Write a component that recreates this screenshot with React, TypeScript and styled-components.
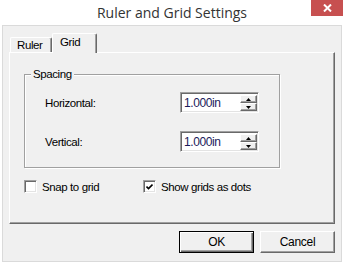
import React from 'react';
import styled, { createGlobalStyle } from 'styled-components';

const GlobalStyle = createGlobalStyle`
  html, body {
    margin: 0;
    padding: 0;
    background: #ffffff;
  }
`;

const uiFont = `'Liberation Sans', Arial, sans-serif`;

const Window = styled.div`
  width: 344px;
  height: 264px;
  background: #ffffff;
  display: flex;
  flex-direction: column;
  font-family: ${uiFont};
  font-size: 11.5px;
  letter-spacing: -0.4px;
  color: #000;
  box-sizing: border-box;
`;

const TitleBar = styled.div`
  position: relative;
  height: 25px;
  flex: none;
  display: flex;
  align-items: center;
  justify-content: center;
  font-family: 'Open Sans', 'Noto Sans', sans-serif;
  font-size: 14px;
  letter-spacing: 0;
  color: #333333;
`;

const CloseButton = styled.div`
  position: absolute;
  top: 0;
  right: 1px;
  width: 32px;
  height: 16px;
  background: #c75050;
  display: flex;
  align-items: center;
  justify-content: center;
`;

const Client = styled.div`
  flex: 1;
  margin: 0 2px 2px;
  border: 1px solid #dadada;
  background: #f0f0f0;
  display: flex;
  flex-direction: column;
  padding: 7px 6px 8px 6px;
  min-height: 0;
`;

const TabStrip = styled.div`
  display: flex;
  align-items: flex-end;
  height: 19px;
  position: relative;
  z-index: 1;
`;

const Tab = styled.div<{ $active?: boolean }>`
  box-sizing: border-box;
  height: ${(p) => (p.$active ? '20px' : '15px')};
  margin-bottom: ${(p) => (p.$active ? '-1px' : '0')};
  margin-left: ${(p) => (p.$active ? '0' : '1px')};
  width: ${(p) => (p.$active ? '45px' : '42px')};
  padding: ${(p) => (p.$active ? '2px 0 0 7px' : '1px 0 0 6px')};
  background: #f0f0f0;
  border-top: 1px solid #ffffff;
  border-left: 1px solid #ffffff;
  border-right: 1px solid #696969;
  box-shadow: inset -1px 0 0 #a0a0a0;
  border-top-left-radius: 2px;
  border-top-right-radius: 2px;
`;

const Panel = styled.div`
  box-sizing: border-box;
  height: 172px;
  border-top: 1px solid #ffffff;
  border-left: 1px solid #ffffff;
  border-right: 1px solid #696969;
  border-bottom: 1px solid #696969;
  box-shadow: inset -1px -1px 0 #a0a0a0;
  display: flex;
  flex-direction: column;
  padding: 0 0 0 14px;
`;

const GroupBox = styled.div`
  position: relative;
  box-sizing: border-box;
  margin-top: 21px;
  width: 256px;
  height: 94px;
  border: 1px solid #a0a0a0;
  box-shadow: 1px 1px 0 #ffffff, inset 1px 1px 0 #ffffff;
  padding: 17px 0 0 20px;
  display: grid;
  grid-template-columns: 135px 79px;
  grid-auto-rows: 21px;
  row-gap: 18px;
  align-items: center;
`;

const Legend = styled.span`
  position: absolute;
  top: -8px;
  left: 6px;
  padding: 0 2px;
  background: #f0f0f0;
  line-height: 14px;
`;

const FieldLabel = styled.span`
  line-height: 14px;
`;

const SpinBox = styled.div`
  box-sizing: border-box;
  height: 21px;
  width: 79px;
  background: #ffffff;
  border-top: 1px solid #a0a0a0;
  border-left: 1px solid #a0a0a0;
  border-right: 1px solid #ffffff;
  border-bottom: 1px solid #ffffff;
  box-shadow: inset 1px 1px 0 #696969, inset -1px -1px 0 #e3e3e3;
  display: flex;
  padding: 2px 1px 1px 2px;
`;

const SpinText = styled.span`
  flex: 1;
  padding: 1px 0 0 1px;
  font-size: 12px;
  letter-spacing: -0.4px;
  color: #1a1a5a;
`;

const SpinButtons = styled.div`
  width: 17px;
  display: flex;
  flex-direction: column;
`;

const SpinButton = styled.div`
  flex: 1;
  box-sizing: border-box;
  background: #f0f0f0;
  border-top: 1px solid #ffffff;
  border-left: 1px solid #ffffff;
  border-right: 1px solid #696969;
  border-bottom: 1px solid #696969;
  box-shadow: inset -1px -1px 0 #a0a0a0;
  display: flex;
  align-items: center;
  justify-content: center;
`;

const CheckRow = styled.div`
  display: grid;
  grid-template-columns: 119px 1fr;
  margin: 12px 0 0 0;
`;

const CheckItem = styled.label`
  display: flex;
  align-items: center;
  gap: 5px;
  height: 13px;
`;

const CheckBox = styled.span`
  box-sizing: border-box;
  width: 13px;
  height: 13px;
  background: #ffffff;
  border-top: 1px solid #a0a0a0;
  border-left: 1px solid #a0a0a0;
  border-right: 1px solid #ffffff;
  border-bottom: 1px solid #ffffff;
  box-shadow: inset 1px 1px 0 #696969, inset -1px -1px 0 #e3e3e3;
  display: flex;
  align-items: center;
  justify-content: center;
`;

const ButtonRow = styled.div`
  display: flex;
  justify-content: flex-end;
  gap: 6px;
  margin-top: 7px;
`;

const Button = styled.div<{ $default?: boolean }>`
  box-sizing: border-box;
  width: 75px;
  height: 22px;
  display: flex;
  align-items: center;
  justify-content: center;
  background: #f0f0f0;
  font-size: 12px;
  letter-spacing: -0.3px;
  border: 1px solid ${(p) => (p.$default ? '#000000' : '#f0f0f0')};
  border-top-color: ${(p) => (p.$default ? '#000000' : '#ffffff')};
  border-left-color: ${(p) => (p.$default ? '#000000' : '#ffffff')};
  border-right-color: ${(p) => (p.$default ? '#000000' : '#696969')};
  border-bottom-color: ${(p) => (p.$default ? '#000000' : '#696969')};
  box-shadow: ${(p) =>
    p.$default
      ? 'inset 1px 1px 0 #ffffff, inset -1px -1px 0 #696969, inset -2px -2px 0 #a0a0a0'
      : 'inset -1px -1px 0 #a0a0a0'};
`;

const Arrow = ({ up }: { up?: boolean }) => (
  <svg width="5" height="3" viewBox="0 0 5 3">
    <path d={up ? 'M2.5 0 L5 3 L0 3 Z' : 'M0 0 L5 0 L2.5 3 Z'} fill="#000" />
  </svg>
);

const Spin = ({ value }: { value: string }) => (
  <SpinBox>
    <SpinText>{value}</SpinText>
    <SpinButtons>
      <SpinButton>
        <Arrow up />
      </SpinButton>
      <SpinButton>
        <Arrow />
      </SpinButton>
    </SpinButtons>
  </SpinBox>
);

export default function App() {
  return (
    <>
      <GlobalStyle />
      <Window>
        <TitleBar>
          Ruler and Grid Settings
          <CloseButton>
            <svg width="9" height="8" viewBox="0 0 9 8">
              <path d="M1 0.5 L8 7.5 M8 0.5 L1 7.5" stroke="#fff" strokeWidth="2" />
            </svg>
          </CloseButton>
        </TitleBar>
        <Client>
          <TabStrip>
            <Tab>Ruler</Tab>
            <Tab $active>Grid</Tab>
          </TabStrip>
          <Panel>
            <GroupBox>
              <Legend>Spacing</Legend>
              <FieldLabel>Horizontal:</FieldLabel>
              <Spin value="1.000in" />
              <FieldLabel>Vertical:</FieldLabel>
              <Spin value="1.000in" />
            </GroupBox>
            <CheckRow>
              <CheckItem>
                <CheckBox />
                Snap to grid
              </CheckItem>
              <CheckItem>
                <CheckBox>
                  <svg width="7" height="7" viewBox="0 0 7 7">
                    <path d="M0.5 3.5 L2.5 5.5 L6.5 1.5" stroke="#000" strokeWidth="1.6" fill="none" />
                  </svg>
                </CheckBox>
                Show grids as dots
              </CheckItem>
            </CheckRow>
          </Panel>
          <ButtonRow>
            <Button $default>OK</Button>
            <Button>Cancel</Button>
          </ButtonRow>
        </Client>
      </Window>
    </>
  );
}
